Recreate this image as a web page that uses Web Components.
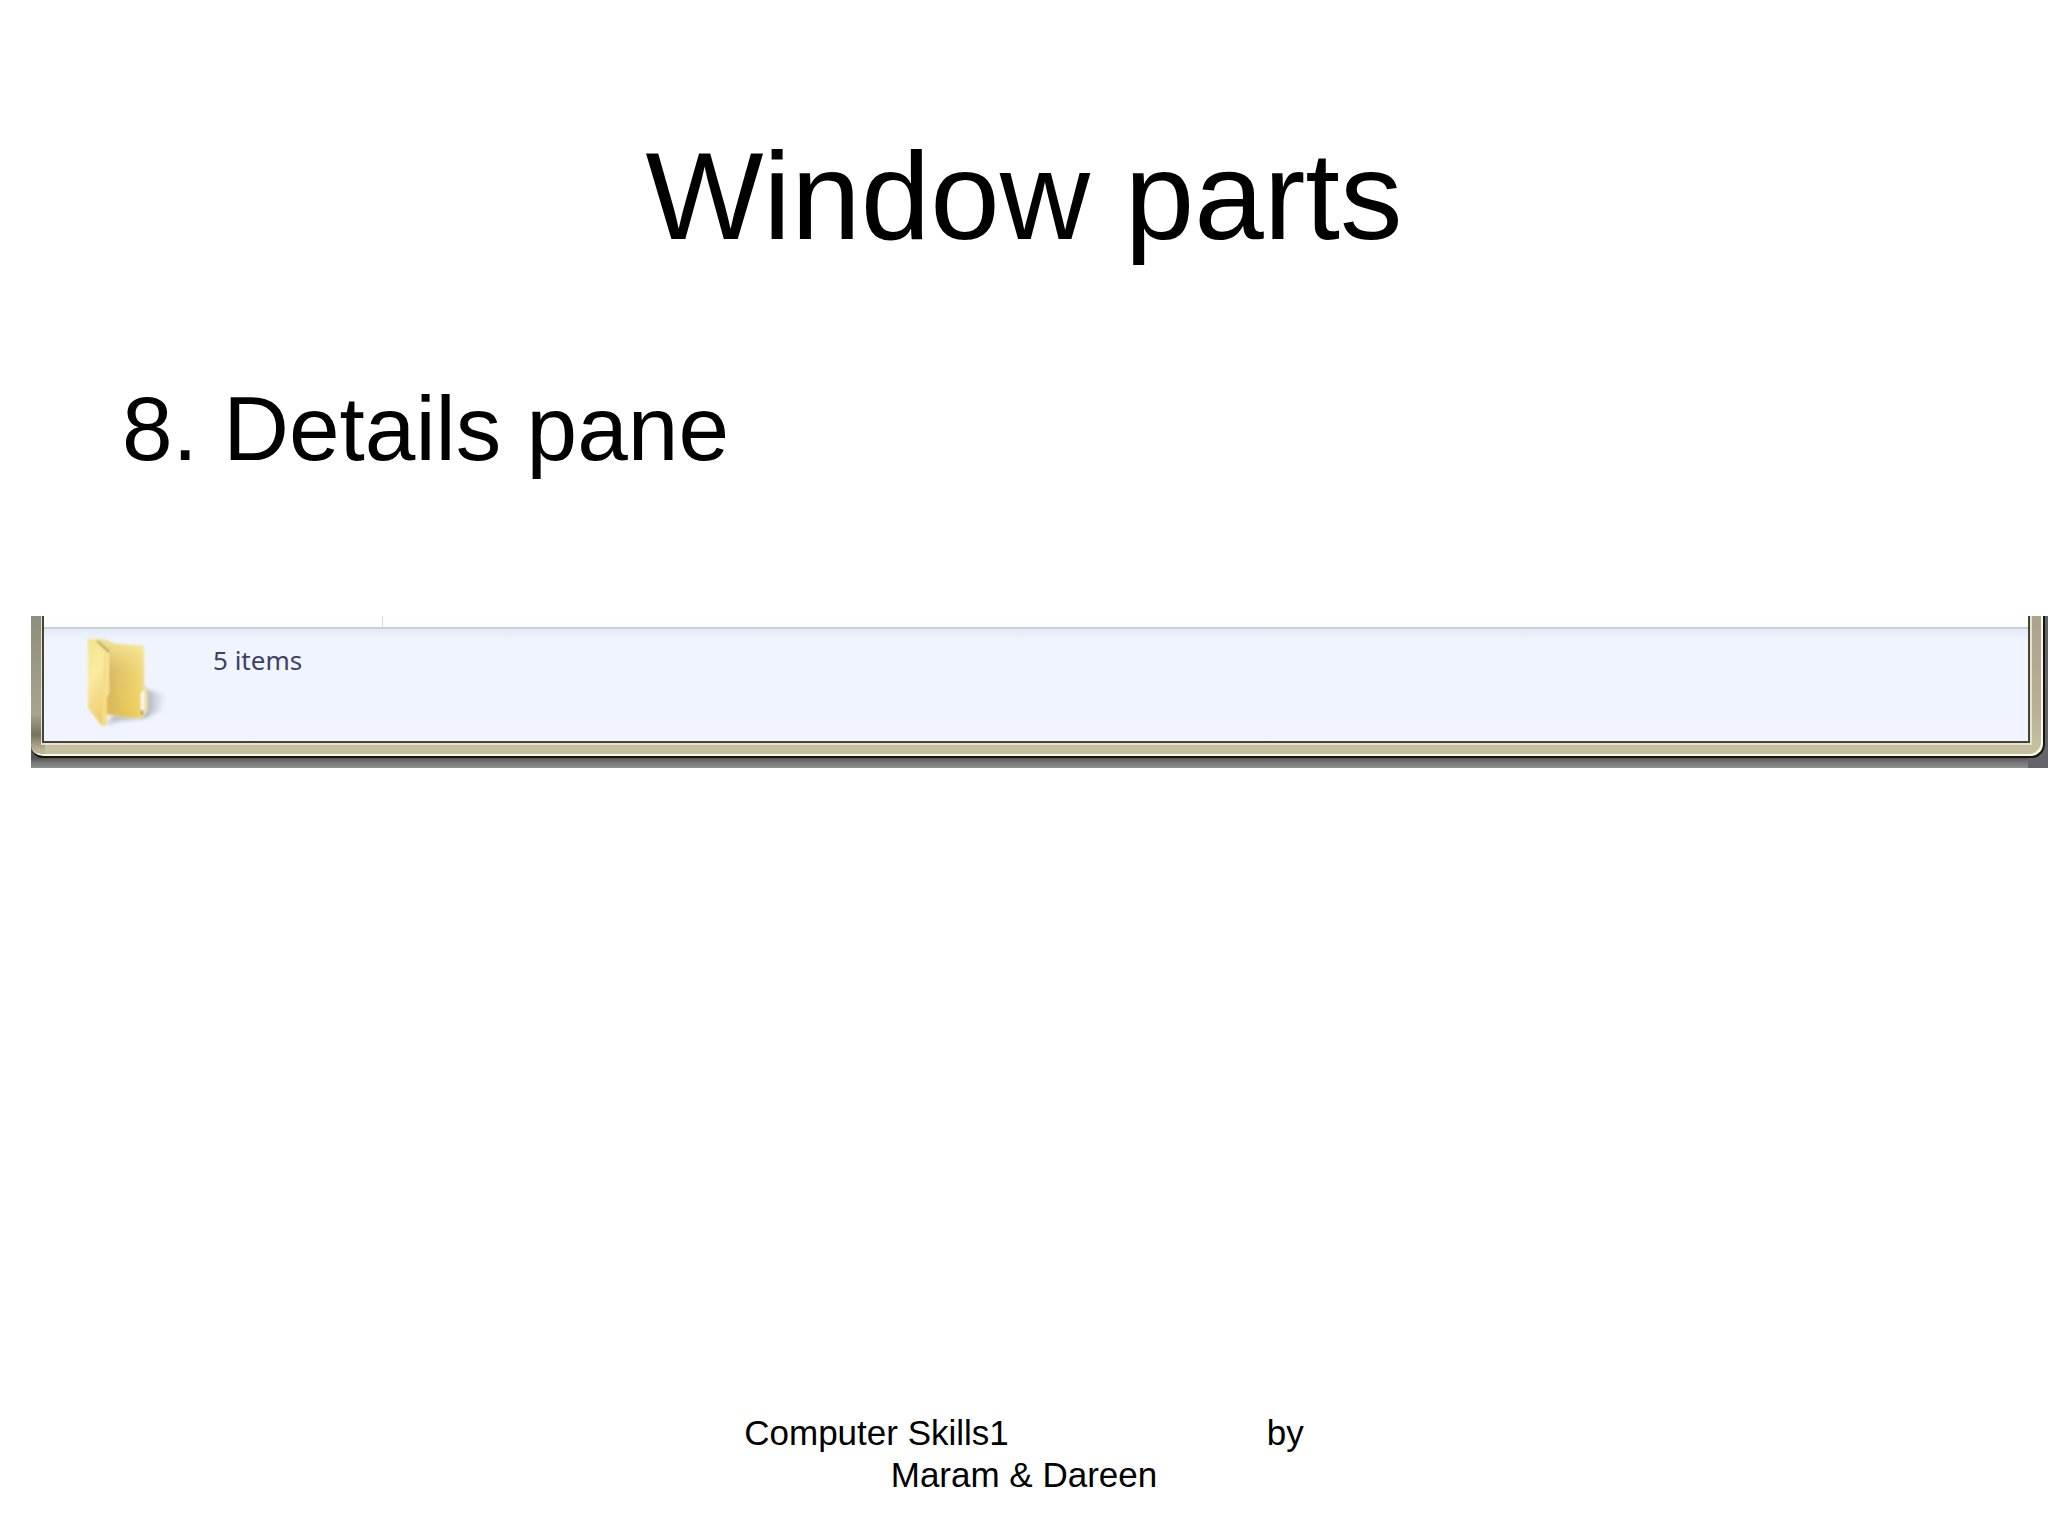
<!DOCTYPE html>
<html lang="en">
<head>
<meta charset="utf-8">
<title>Window parts</title>
<style>
body { margin: 0; background: #fff; color: #000; font-family: "Liberation Sans", Arial, sans-serif; }
</style>
</head>
<body>
<lesson-slide>
  <span slot="title">Window parts</span>
  <span slot="topic">8. Details pane</span>
  <window-bottom slot="figure"><details-pane slot="pane"><folder-icon slot="icon"></folder-icon>5 items</details-pane></window-bottom>
  <slide-credit slot="footer"><span slot="course">Computer Skills1</span><span slot="by">by</span><span slot="authors">Maram &amp; Dareen</span></slide-credit>
</lesson-slide>
<script>
const define = (name, markup) => customElements.define(name, class extends HTMLElement {
  constructor() {
    super();
    this.attachShadow({ mode: "open" }).innerHTML = markup;
  }
});

define("folder-icon", `
<style>:host { display: block; width: 84px; height: 96px; } svg { display: block; width: 100%; height: 100%; }</style>
<svg viewBox="0 0 84 96" aria-hidden="true">
  <defs>
    <linearGradient id="front" x1="0" y1="0" x2="0.3" y2="1"><stop offset="0" stop-color="#f5e48c"/><stop offset=".45" stop-color="#faeaa0"/><stop offset="1" stop-color="#f0cd70"/></linearGradient>
    <linearGradient id="back" x1="20" y1="0" x2="60" y2="0" gradientUnits="userSpaceOnUse"><stop offset="0" stop-color="#b99b45"/><stop offset=".3" stop-color="#cfb056"/><stop offset=".7" stop-color="#e6c85f"/><stop offset="1" stop-color="#f2da7c"/></linearGradient>
    <linearGradient id="glow" x1="0" y1="0" x2="0" y2="1"><stop offset="0" stop-color="#fbf0a4" stop-opacity=".85"/><stop offset=".4" stop-color="#f3dc88" stop-opacity=".4"/><stop offset="1" stop-color="#f0cc52" stop-opacity=".5"/></linearGradient>
    <linearGradient id="cast" x1="0" y1="0" x2="1" y2="0"><stop offset="0" stop-color="#8e939b" stop-opacity=".9"/><stop offset="1" stop-color="#b9c0ca" stop-opacity="0"/></linearGradient>
    <filter id="soft" x="-20%" y="-20%" width="140%" height="140%"><feGaussianBlur stdDeviation="2"/></filter>
    <filter id="edge" x="-10%" y="-10%" width="120%" height="120%"><feGaussianBlur stdDeviation=".9"/></filter>
  </defs>
  <path d="M60 54 L84 60 L76 76 L58 84 Z" fill="url(#cast)" filter="url(#soft)"/>
  <path d="M22 90 L30 79 L60 82 L56 84 L36 86 Z" fill="#9aa0a8" opacity=".6" filter="url(#soft)"/>
  <g filter="url(#edge)">
    <path d="M4 4 L18 4 L32 9 L60 11 L60 50 L59 83 L40 82 L22 79 L18 20 Z" fill="url(#back)"/>
    <path d="M4 4 L18 4 L32 9 L60 11 L60 50 L59 83 L40 82 L22 79 L18 20 Z" fill="url(#glow)"/>
    <path d="M59 50 L62 52 L64 58 L64 76 L60 81 L56 82 Z" fill="#e9dfab"/>
    <path d="M57 58 L60 55 V76 L57 77 Z" fill="#fffdf0"/>
    <path d="M58 75 V80" stroke="#9b8740" stroke-width="2"/>
    <path d="M4 5 L13 7 L25 18 L25 58 L23 62 L23 90 L18 91 L4 73 Z" fill="url(#front)"/>
    <path d="M20 16 L25 18 V58 L23 62 V90 L18 90 Z" fill="#f5dc86"/>
    <path d="M13 8 L24 18 V57 L22 61" fill="none" stroke="#fff4c4" stroke-width="1"/>
    <path d="M13 6 L25 17" stroke="#b39c4c" stroke-width="2"/>
  </g>
</svg>`);

define("details-pane", `
<style>
:host { display: flex; flex-direction: column; height: 125px; color: #3d4166; font-family: "Noto Sans", "Open Sans", sans-serif; font-size: 26px; line-height: 36px; }
.edge { flex: none; height: 11px; background: #fdfffe; display: flex; }
.edge i { width: 338px; border-right: 1px solid #d5dadd; }
.body { flex: 1; display: flex; gap: 45px; padding: 6px 0 0 40px; border-top: 2px solid #c8d1db; background: linear-gradient(#e5ebf4, #eff4fd 12px, #f0f4fe 80%, #f2f4fe); }
.label { padding-top: 7px; }
</style>
<div class="edge"><i></i></div>
<div class="body"><slot name="icon"></slot><div class="label"><slot></slot></div></div>`);

define("window-bottom", `
<style>
:host { display: block; }
.desktop { padding: 0 3px 10px 0; background: linear-gradient(90deg, transparent calc(100% - 20px), #62646a 0), linear-gradient(#555 142px, #747474 146px, #8c918e 152px); }
.frame { padding: 0 11px 11px 10px; border: solid #14150d; border-width: 0 2px 2px 0; border-radius: 0 0 14px 12px; box-shadow: inset -2px -2px #fbf9e6; background: linear-gradient(#8f8d7c, #a7a38e 70%, #77735d 85%, #bcb698 96%) 0 0 / 14px 100% no-repeat, linear-gradient(#aaa48d, #b8b197 70%, #c6c0a2 92%); }
.inner { border: solid #e6e1c9; border-width: 0 2px 2px 1px; }
.pane { border: solid #45443c; border-width: 0 2px 2px; }
</style>
<div class="desktop"><div class="frame"><div class="inner"><div class="pane"><slot name="pane"></slot></div></div></div></div>`);

define("slide-credit", `
<style>
:host { display: block; font-size: 35px; line-height: 42px; }
.line { display: flex; justify-content: center; gap: 258px; }
</style>
<div class="line"><slot name="course"></slot><slot name="by"></slot></div>
<div class="line"><slot name="authors"></slot></div>`);

define("lesson-slide", `
<style>
:host { display: flex; flex-direction: column; min-height: 100vh; box-sizing: border-box; padding: 124px 0 40px; }
h1, h2 { margin: 0; font-weight: 400; }
h1 { font-size: 125px; line-height: 144px; text-align: center; }
h2 { font-size: 91px; line-height: 104px; padding: 109px 122px 0; }
figure { margin: 135px 0 0 31px; }
footer { margin-top: auto; }
</style>
<h1><slot name="title"></slot></h1>
<h2><slot name="topic"></slot></h2>
<figure><slot name="figure"></slot></figure>
<footer><slot name="footer"></slot></footer>`);
</script>
</body>
</html>
